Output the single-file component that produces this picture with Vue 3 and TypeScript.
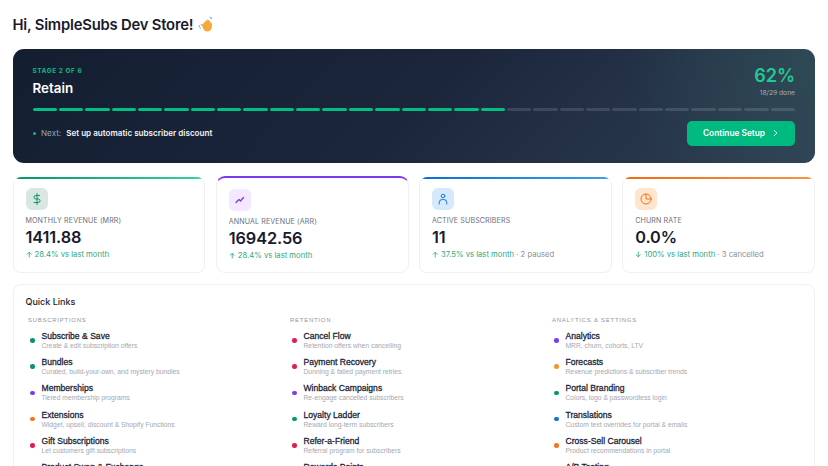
<script setup lang="ts">
interface Stat { label: string; value: string; arrow: 'up' | 'down'; delta: string; extra?: string; tone: string; icon: string }
interface Item { title: string; desc: string; color: string }
interface Column { heading: string; items: Item[] }

const segments = Array.from({ length: 29 }, (_, i) => i < 18)

const stats: Stat[] = [
  { label: 'Monthly Revenue (MRR)', value: '1411.88', arrow: 'up', delta: '28.4% vs last month', tone: 'green', icon: 'dollar' },
  { label: 'Annual Revenue (ARR)', value: '16942.56', arrow: 'up', delta: '28.4% vs last month', tone: 'purple', icon: 'trend' },
  { label: 'Active Subscribers', value: '11', arrow: 'up', delta: '37.5% vs last month', extra: ' · 2 paused', tone: 'blue', icon: 'user' },
  { label: 'Churn Rate', value: '0.0%', arrow: 'down', delta: '100% vs last month', extra: ' · 3 cancelled', tone: 'orange', icon: 'pie' }
]

const G = '#059669', P = '#7c3aed', O = '#f97316', R = '#e11d48', B = '#0b74d8', A = '#f59331'

const columns: Column[] = [
  { heading: 'Subscriptions', items: [
    { title: 'Subscribe & Save', desc: 'Create & edit subscription offers', color: G },
    { title: 'Bundles', desc: 'Curated, build-your-own, and mystery bundles', color: G },
    { title: 'Memberships', desc: 'Tiered membership programs', color: P },
    { title: 'Extensions', desc: 'Widget, upsell, discount & Shopify Functions', color: O },
    { title: 'Gift Subscriptions', desc: 'Let customers gift subscriptions', color: R },
    { title: 'Product Swap & Exchange', desc: 'Let subscribers swap products', color: B }
  ] },
  { heading: 'Retention', items: [
    { title: 'Cancel Flow', desc: 'Retention offers when cancelling', color: R },
    { title: 'Payment Recovery', desc: 'Dunning & failed payment retries', color: R },
    { title: 'Winback Campaigns', desc: 'Re-engage cancelled subscribers', color: P },
    { title: 'Loyalty Ladder', desc: 'Reward long-term subscribers', color: G },
    { title: 'Refer-a-Friend', desc: 'Referral program for subscribers', color: R },
    { title: 'Rewards Points', desc: 'Points for purchases and renewals', color: A }
  ] },
  { heading: 'Analytics & Settings', items: [
    { title: 'Analytics', desc: 'MRR, churn, cohorts, LTV', color: P },
    { title: 'Forecasts', desc: 'Revenue predictions & subscriber trends', color: A },
    { title: 'Portal Branding', desc: 'Colors, logo & passwordless login', color: G },
    { title: 'Translations', desc: 'Custom text overrides for portal & emails', color: B },
    { title: 'Cross-Sell Carousel', desc: 'Product recommendations in portal', color: O },
    { title: 'A/B Testing', desc: 'Experiment with offers', color: P }
  ] }
]
</script>

<template>
  <main class="page">
    <h1 class="greeting">
      Hi, SimpleSubs Dev Store!
      <svg class="wave" viewBox="0 0 18 18" aria-hidden="true">
        <path d="M1 9.5c.2 1.8 1.1 3.2 2.5 4.1M3.2 8.6c.1 1 .6 1.8 1.3 2.4" fill="none" stroke="#5dadec" stroke-width="1"/>
        <path d="M12.2 1c1.1.2 2 1.1 2.3 2.2" fill="none" stroke="#5dadec" stroke-width="1.2"/>
        <path d="M5.2 8.6 9.4 3.9c.5-.5 1.2-.1 1 .6l-.5 1 1.2-1.2c.6-.5 1.4.1 1 .8l-.4.7c.8-.5 1.6.2 1.4 1 .9-.2 1.6.5 1.7 1.6.4 3.6-.8 7.7-4.4 8-2.5.2-4.4-1.3-5.1-3.5L4.4 9.8c-.3-.8.3-1.5.8-1.2Z" fill="#f6a93b"/>
      </svg>
    </h1>

    <section class="hero">
      <div class="hero-top">
        <div>
          <div class="stage">STAGE 2 OF 6</div>
          <div class="stage-name">Retain</div>
        </div>
        <div class="score">
          <div class="pct">62%</div>
          <div class="done">18/29 done</div>
        </div>
      </div>
      <div class="bar">
        <span v-for="(on, i) in segments" :key="i" class="seg" :class="{ on }"></span>
      </div>
      <div class="hero-bottom">
        <div class="next">
          <span class="next-dot"></span>
          <span class="next-label">Next:</span>
          <span class="next-text">Set up automatic subscriber discount</span>
        </div>
        <button class="cta" type="button">
          Continue Setup
          <svg viewBox="0 0 12 12" class="chev" aria-hidden="true"><path d="M3.6 1.2 8.4 6l-4.8 4.8" fill="none" stroke="currentColor" stroke-width="1.5" stroke-linecap="round" stroke-linejoin="round"/></svg>
        </button>
      </div>
    </section>

    <section class="stats">
      <article v-for="s in stats" :key="s.label" class="stat" :class="s.tone">
        <div class="icon">
          <svg viewBox="0 0 24 24" fill="none" stroke="currentColor" stroke-width="2" stroke-linecap="round" stroke-linejoin="round">
            <template v-if="s.icon === 'dollar'">
              <path d="M12 1v22"/><path d="M17 5H9.5a3.5 3.5 0 0 0 0 7h5a3.5 3.5 0 0 1 0 7H6"/>
            </template>
            <template v-else-if="s.icon === 'trend'">
              <path d="M4 17l6-6 3 3 6-7" stroke-width="2.6"/>
            </template>
            <template v-else-if="s.icon === 'user'">
              <circle cx="12" cy="6" r="3.6"/><path d="M4.5 22v-3a6 6 0 0 1 6-6h3a6 6 0 0 1 6 6v3"/>
            </template>
            <template v-else>
              <circle cx="12" cy="12" r="10"/><path d="M12 2v10h10"/>
            </template>
          </svg>
        </div>
        <div class="label">{{ s.label }}</div>
        <div class="value">{{ s.value }}</div>
        <div class="delta">
          <svg viewBox="0 0 10 10" class="arrow" :class="{ down: s.arrow === 'down' }" aria-hidden="true"><path d="M5 9.5V1.5M1.4 5 5 1.4 8.6 5" fill="none" stroke="currentColor" stroke-width="1.3"/></svg>
          <span>{{ s.delta }}</span><span v-if="s.extra" class="extra">{{ s.extra }}</span>
        </div>
      </article>
    </section>

    <section class="links">
      <h2 class="links-title">Quick Links</h2>
      <div class="cols">
        <div v-for="c in columns" :key="c.heading" class="col">
          <div class="col-head">{{ c.heading }}</div>
          <a v-for="it in c.items" :key="it.title" class="item">
            <span class="dot" :style="{ background: it.color }"></span>
            <span class="item-text">
              <span class="item-title">{{ it.title }}</span>
              <span class="item-desc">{{ it.desc }}</span>
            </span>
          </a>
        </div>
      </div>
    </section>
  </main>
</template>

<style>
html, body { margin: 0; overflow: hidden; background: #fff; }
</style>

<style scoped>
.page {
  box-sizing: border-box;
  height: 466px;
  overflow: hidden;
  padding: 15.3px 13px 0 12.5px;
  font-family: Inter, "Liberation Sans", sans-serif;
  color: #1a1a2e;
}
.greeting {
  margin: 0 0 14px;
  height: 20px;
  display: flex;
  align-items: center;
  gap: 5px;
  font-size: 14.8px;
  line-height: 20px;
  font-weight: 600;
  letter-spacing: -.2px;
  color: #1a1a2e;
}
.wave { width: 17px; height: 17px; margin-top: -1px; }

.hero {
  box-sizing: border-box;
  height: 114px;
  padding: 18px 20px 0;
  border-radius: 11px;
  color: #fff;
  background:
    radial-gradient(circle at 100% 0%, rgba(50, 90, 90, .5), rgba(50, 90, 90, 0) 24%),
    linear-gradient(135deg, #141e31 0%, #1b263b 50%, #2f3f55 100%);
}
.hero-top { display: flex; justify-content: space-between; align-items: flex-start; height: 40.3px; }
.stage { font-size: 6.5px; line-height: 9px; font-weight: 700; letter-spacing: .55px; color: #10b981; }
.stage-name { margin-top: 3.5px; font-size: 13.4px; line-height: 17px; font-weight: 600; }
.score { text-align: right; }
.pct { font-size: 18px; line-height: 18px; font-weight: 600; color: #22c997; }
.done { margin-top: 3.5px; font-size: 6.7px; line-height: 9px; color: #a3afc0; }
.bar { display: flex; gap: 2px; height: 3px; }
.seg { flex: 1; border-radius: 2px; background: rgba(255, 255, 255, .13); }
.seg.on { background: #00bf83; }
.hero-bottom { display: flex; justify-content: space-between; align-items: center; margin-top: 10px; }
.next { display: flex; align-items: center; font-size: 8.1px; line-height: 10px; }
.next-dot { width: 3.5px; height: 3.5px; border-radius: 50%; background: #10b981; margin-right: 5px; }
.next-label { color: #94a3b8; margin-right: 5px; }
.next-text { font-weight: 600; color: #f1f5f9; }
.cta {
  display: flex;
  align-items: center;
  justify-content: center;
  gap: 7px;
  width: 108px;
  height: 25.5px;
  border: 0;
  border-radius: 5px;
  background: #00ba80;
  color: #fff;
  font: 600 8.3px Inter, "Liberation Sans", sans-serif;
}
.chev { width: 7px; height: 8px; }

.stats {
  display: grid;
  grid-template-columns: repeat(4, 1fr);
  gap: 10.5px;
  margin-top: 12.6px;
  align-items: end;
}
.stat {
  position: relative;
  overflow: hidden;
  box-sizing: border-box;
  height: 96px;
  padding: 11.6px 12px 0;
  background: #fff;
  border: 1px solid #eef0f3;
  border-top: 0;
  border-radius: 8px;
}
.stat::before {
  content: "";
  position: absolute;
  left: 0;
  right: 0;
  top: 0;
  height: 2.3px;
  background: var(--edge);
}
.stat.green { --edge: linear-gradient(90deg, #059669, #34d399); --tint: #d9e6e2; --ink: #059669; }
.stat.blue { --edge: linear-gradient(90deg, #0b6fd0, #3b9ee8); --tint: #d6e9fb; --ink: #1478d4; }
.stat.orange { --edge: linear-gradient(90deg, #f26a10, #fb923c); --tint: #fde6cd; --ink: #f97316; }
.stat.purple {
  --edge: none;
  --tint: #f3e8ff;
  --ink: #7c3aed;
  height: 97px;
  padding-top: 11.6px;
  border-top: 2px solid #7c3aed;
  border-radius: 9px;
}
.icon {
  width: 22px;
  height: 22px;
  display: flex;
  align-items: center;
  justify-content: center;
  border-radius: 6px;
  background: var(--tint);
  color: var(--ink);
}
.icon svg { width: 12px; height: 12px; }
.label { margin-top: 5.5px; font-size: 7.1px; line-height: 10px; color: #6b7280; text-transform: uppercase; letter-spacing: .12px; white-space: nowrap; }
.value { margin-top: 1px; font-size: 16.3px; line-height: 20px; font-weight: 600; letter-spacing: -.1px; color: #1a1a2e; }
.delta { display: flex; align-items: center; margin-top: 2.5px; font-size: 7.7px; line-height: 11px; color: #2eaa80; white-space: pre; }
.arrow { width: 6.5px; height: 7px; margin-right: 2.5px; }
.arrow.down { transform: rotate(180deg); }
.extra { color: #8b8f98; }

.links {
  box-sizing: border-box;
  margin-top: 11px;
  height: 200px;
  padding: 11px 12px 0;
  background: #fff;
  border: 1px solid #eef0f3;
  border-radius: 8px;
}
.links-title { margin: 0; font-size: 9px; line-height: 12px; font-weight: 500; color: #1a1a2e; }
.cols { display: grid; grid-template-columns: repeat(3, 262px); margin-top: 8px; padding-left: 2.5px; }
.col-head { font: 400 5.9px/8px "Liberation Sans", sans-serif; letter-spacing: .8px; text-transform: uppercase; color: #8f95a0; margin-bottom: 3.3px; }
.item { display: flex; align-items: center; height: 26.3px; padding-left: 2px; }
.dot { flex: none; width: 4.5px; height: 4.5px; border-radius: 50%; margin-right: 7px; }
.item-text { display: flex; flex-direction: column; }
.item-title { font: 400 8.58px/10px "Liberation Sans", sans-serif; -webkit-text-stroke: .28px #1a1f36; color: #1a1f36; white-space: nowrap; }
.item-desc { font: 400 6.75px/9px "Liberation Sans", sans-serif; color: #a3a8b2; white-space: nowrap; }
</style>
